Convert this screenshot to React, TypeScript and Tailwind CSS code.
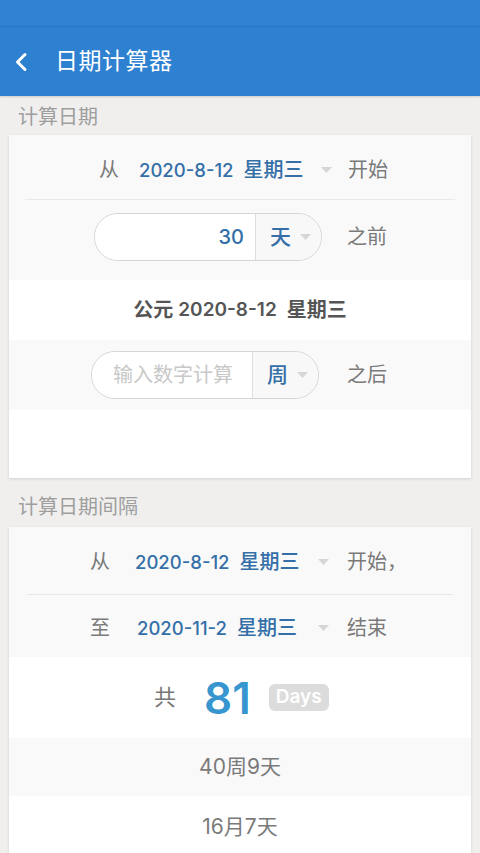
import React from "react";

const FONT = { fontFamily: 'Inter, "Noto Sans CJK SC", "Noto Sans", sans-serif' };

function Tri() {
  return (
    <svg width="11" height="6" viewBox="0 0 11 6" className="block">
      <path d="M0 0 L11 0 L5.5 6 Z" fill="#d6d6d6" />
    </svg>
  );
}

function Chevron() {
  return (
    <svg width="14" height="20" viewBox="0 0 14 20" className="block">
      <path d="M11 2.5 L3.5 10 L11 17.5" fill="none" stroke="white" strokeWidth="3" strokeLinecap="round" strokeLinejoin="round" />
    </svg>
  );
}

function DateRow(props: {
  pl: number;
  label: string;
  labelW: string;
  digits: string;
  dateW: string;
  triW: string;
  tail: string;
  h: string;
  pt: string;
}) {
  return (
    <div className={`flex items-center ${props.h} ${props.pt}`} style={{ paddingLeft: props.pl }}>
      <span className={`${props.labelW} text-[20px] text-[#7a7a7a]`}>{props.label}</span>
      <span className={`${props.dateW} flex items-baseline font-medium text-[#346fa8] whitespace-nowrap`}>
        <span className="text-[18.5px]">{props.digits}</span>
        <span className="ml-[10px] text-[20px]">星期三</span>
      </span>
      <span className={`${props.triW} flex items-center`}>
        <Tri />
      </span>
      <span className="text-[20px] text-[#7a7a7a] whitespace-nowrap">{props.tail}</span>
    </div>
  );
}

export default function App() {
  return (
    <div className="w-[480px] h-[853px] overflow-hidden bg-[#f0efee]" style={FONT}>
      {/* status bar */}
      <div className="h-[27px] bg-[#2f82d1] border-b border-[#2b78c4]" />
      {/* header */}
      <div className="h-[69px] bg-[#2e80d0] flex items-center shadow-[0_1px_2px_rgba(0,0,0,0.15)]">
        <div className="pl-[14px] w-[55px]">
          <Chevron />
        </div>
        <span className="text-white text-[23px] tracking-[0.5px] leading-none">日期计算器</span>
      </div>

      {/* section 1 label */}
      <div className="h-[39px] flex items-center pl-[18px] pt-[3px] text-[20px] text-[#9e9e9e]">计算日期</div>

      {/* card 1 */}
      <div className="mx-[9px] bg-white shadow-[0_1px_3px_rgba(0,0,0,0.12)]">
        <div className="bg-[#f9f9f9]">
          <DateRow pl={90} label="从" labelW="w-[40px]" digits="2020-8-12" dateW="w-[182px]" triW="w-[27px]" tail="开始" h="h-[64px]" pt="pt-[5px]" />
          <div className="mx-[16px] h-px bg-[#e8e8e8]" />
          <div className="h-[80px] flex items-center pl-[85px] pb-[6px]">
            <div className="flex h-[48px] w-[228px] rounded-full border border-[#d6d6d6] overflow-hidden">
              <div className="w-[160px] bg-white flex items-center justify-end pr-[11px] text-[20px] font-medium text-[#346fa8]">30</div>
              <div className="flex-1 border-l border-[#dedede] bg-[#f8f8f8] flex items-center pl-[14px] gap-[9px]">
                <span className="text-[21px] text-[#346fa8] font-medium">天</span>
                <Tri />
              </div>
            </div>
            <span className="ml-[25px] text-[20px] text-[#7a7a7a]">之前</span>
          </div>
        </div>
        <div className="h-[60px] bg-white flex items-center justify-center text-[20px] font-semibold text-[#555555] whitespace-pre">
          <span>公元 </span>
          <span className="text-[19px]">2020-8-12</span>
          <span className="ml-[10px]">星期三</span>
        </div>
        <div className="h-[70px] bg-[#f9f9f9] flex items-center pl-[82px]">
          <div className="flex h-[48px] w-[228px] rounded-full border border-[#d6d6d6] overflow-hidden">
            <div className="w-[160px] bg-white flex items-center pl-[21px] text-[20px] text-[#c8c8c8]">输入数字计算</div>
            <div className="flex-1 border-l border-[#dedede] bg-[#f8f8f8] flex items-center pl-[14px] gap-[9px]">
              <span className="text-[21px] text-[#346fa8] font-medium">周</span>
              <Tri />
            </div>
          </div>
          <span className="ml-[28px] text-[20px] text-[#7a7a7a]">之后</span>
        </div>
        <div className="h-[68px] bg-white" />
      </div>

      {/* section 2 label */}
      <div className="h-[49px] flex items-center pl-[18px] pt-[9px] text-[20px] text-[#9e9e9e]">计算日期间隔</div>

      {/* card 2 */}
      <div className="mx-[9px] bg-white shadow-[0_1px_3px_rgba(0,0,0,0.12)]">
        <div className="bg-[#f9f9f9]">
          <DateRow pl={81} label="从" labelW="w-[45px]" digits="2020-8-12" dateW="w-[183px]" triW="w-[29px]" tail="开始，" h="h-[67px]" pt="pt-[2px]" />
          <div className="mx-[18px] h-px bg-[#e8e8e8]" />
          <DateRow pl={81} label="至" labelW="w-[47px]" digits="2020-11-2" dateW="w-[181px]" triW="w-[29px]" tail="结束" h="h-[62px]" pt="pt-[4px]" />
        </div>
        <div className="h-[81px] bg-white flex items-center pl-[145px]">
          <span className="text-[22px] text-[#777777]">共</span>
          <span className="ml-[28px] text-[44px] font-semibold text-[#3795cf] leading-none">81</span>
          <span className="ml-[18px] h-[27px] px-[7px] rounded-[6px] bg-[#dcdcdc] text-white text-[19px] font-semibold flex items-center">Days</span>
        </div>
        <div className="h-[58px] bg-[#f9f9f9] flex items-center justify-center text-[21px] text-[#7a7a7a]">40周9天</div>
        <div className="h-[64px] bg-white flex items-center justify-center text-[21px] text-[#7a7a7a] pb-[2px]">16月7天</div>
      </div>
    </div>
  );
}
